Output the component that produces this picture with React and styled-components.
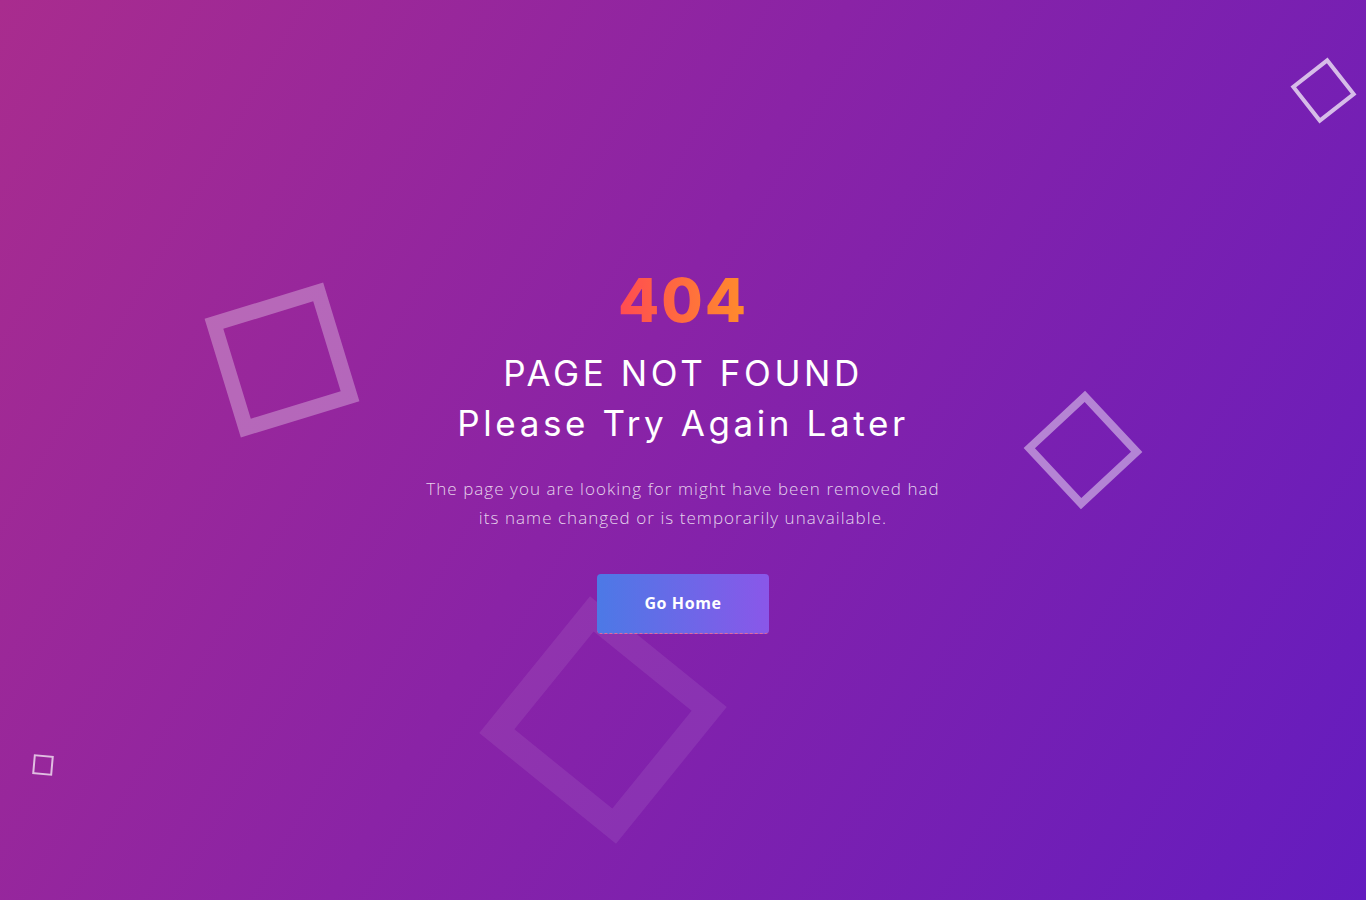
import React from 'react';
import styled, { createGlobalStyle } from 'styled-components';

const GlobalStyle = createGlobalStyle`
  html, body {
    margin: 0;
    padding: 0;
  }
  body {
    font-family: 'Open Sans', 'Liberation Sans', sans-serif;
  }
`;

const SHAPES = [
  { top: 298, left: 220, size: 124, border: 15, rotate: -17, alpha: 0.3 },
  { top: 408, left: 1041, size: 84, border: 8, rotate: 47, alpha: 0.45 },
  { top: 67, left: 1300, size: 47, border: 4, rotate: 52, alpha: 0.7 },
  { top: 755, left: 33, size: 20, border: 2, rotate: 5, alpha: 0.7 },
  { top: 632, left: 515, size: 176, border: 25, rotate: 39, alpha: 0.08 },
];

const App = () => {
  return (
    <>
      <GlobalStyle />
      <Page>
        {SHAPES.map((s, i) => (
          <Shape key={i} {...s} />
        ))}
        <Content>
          <Code>404</Code>
          <Title>
            PAGE NOT FOUND
            <br />
            Please Try Again Later
          </Title>
          <Text>
            The page you are looking for might have been removed had
            <br />
            its name changed or is temporarily unavailable.
          </Text>
          <HomeButton href="#">Go Home</HomeButton>
        </Content>
      </Page>
    </>
  );
};

const Page = styled.main`
  position: relative;
  min-height: 100vh;
  overflow: hidden;
  display: flex;
  align-items: center;
  justify-content: center;
  background: linear-gradient(120deg, #a92c8e 0%, #8a23a6 45%, #641cbf 100%);
`;

const Shape = styled.span`
  position: absolute;
  top: ${({ top }) => top}px;
  left: ${({ left }) => left}px;
  width: ${({ size }) => size}px;
  height: ${({ size }) => size}px;
  box-sizing: border-box;
  border: ${({ border }) => border}px solid rgba(255, 255, 255, ${({ alpha }) => alpha});
  transform: rotate(${({ rotate }) => rotate}deg);
`;

const Content = styled.section`
  position: relative;
  z-index: 1;
  display: flex;
  flex-direction: column;
  align-items: center;
  text-align: center;
  padding-bottom: 2px;
`;

const Code = styled.h1`
  margin: 0;
  padding-top: 5px;
  font-family: 'Inter', 'Open Sans', sans-serif;
  font-size: 60px;
  font-weight: 800;
  line-height: 1;
  letter-spacing: 2px;
  background: linear-gradient(90deg, #ff4b52 0%, #ff8d2b 100%);
  -webkit-background-clip: text;
  background-clip: text;
  color: transparent;
`;

const Title = styled.h2`
  margin: 18px 0 0;
  font-family: 'Inter', 'Open Sans', sans-serif;
  font-size: 35px;
  font-weight: 400;
  line-height: 50px;
  letter-spacing: 3.6px;
  color: #ffffff;
`;

const Text = styled.p`
  margin: 26px 0 0;
  font-family: 'Open Sans', sans-serif;
  font-size: 17px;
  font-weight: 300;
  line-height: 29px;
  letter-spacing: 1.05px;
  color: rgba(255, 255, 255, 0.8);
`;

const HomeButton = styled.a`
  margin-top: 42px;
  width: 172px;
  height: 60px;
  box-sizing: border-box;
  display: flex;
  align-items: center;
  justify-content: center;
  border-radius: 4px;
  border-bottom: 1px dashed #e46a9a;
  background: linear-gradient(90deg, #4c79e6 0%, #8a57e9 100%);
  font-family: 'Open Sans', sans-serif;
  font-size: 16px;
  font-weight: 700;
  letter-spacing: 0.6px;
  color: #ffffff;
  text-decoration: none;
`;

export default App;
